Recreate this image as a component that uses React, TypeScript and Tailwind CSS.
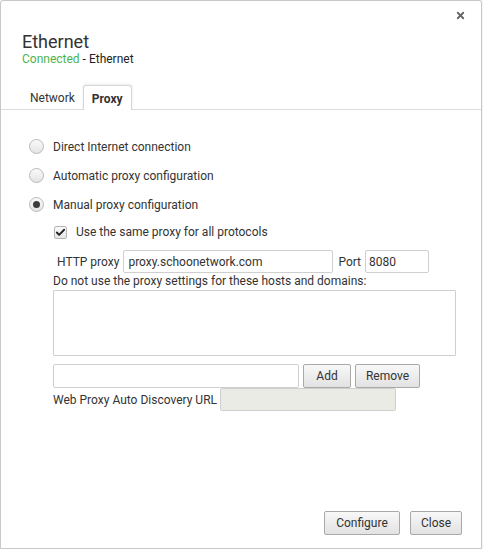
import { Check, X } from "lucide-react";

function Radio({ checked }: { checked?: boolean }) {
  return (
    <span className="flex h-[15px] w-[15px] items-center justify-center rounded-full border border-[#b9b9b9] bg-gradient-to-b from-[#fafafa] to-[#e4e4e4]">
      {checked && <span className="h-[7px] w-[7px] rounded-full bg-[#3c3c3c]" />}
    </span>
  );
}

function Btn({ children, className = "" }: { children: React.ReactNode; className?: string }) {
  return (
    <button
      className={`h-[24px] rounded-[2px] border border-[#a9a9a9] bg-gradient-to-b from-[#f8f8f8] to-[#e2e2e2] text-[12px] text-[#333] ${className}`}
    >
      {children}
    </button>
  );
}

export default function App() {
  return (
    <div
      className="h-[549px] w-[483px] bg-[#f4f4f4]"
      style={{ fontFamily: "Roboto, 'Liberation Sans', sans-serif" }}
    >
      <div className="relative flex h-[549px] w-[482px] flex-col rounded-t-[3px] border border-[#c8c8c8] bg-white">
        <X className="absolute right-[15px] top-[9px] h-[11px] w-[11px] text-[#666]" strokeWidth={4} />

        {/* Header */}
        <div className="px-[21px] pt-[31px]">
          <h1 className="text-[18px] leading-[20px] text-[#333]">Ethernet</h1>
          <p className="text-[12px] leading-[14px] text-[#222]">
            <span className="text-[#4cb54e]">Connected</span> - Ethernet
          </p>
        </div>

        {/* Tabs */}
        <div className="mt-[19px] flex items-end border-b border-[#dcdcdc] pl-[21px]">
          <div className="px-[8px] pb-[3px] text-[12px] leading-[16px] text-[#333]">Network</div>
          <div className="-mb-px rounded-t-[3px] border border-b-0 border-[#d6d6d6] bg-white px-[8px] pt-[5px] pb-[3px] text-[12px] font-bold leading-[16px] text-[#333] shadow-[0_-1px_3px_rgba(0,0,0,0.08)]">
            Proxy
          </div>
        </div>

        {/* Body */}
        <div className="px-[28px] pt-[29px] text-[12px] text-[#333]">
          <div className="flex flex-col gap-[14px]">
            <label className="flex h-[15px] items-center gap-[9px]">
              <Radio />
              Direct Internet connection
            </label>
            <label className="flex h-[15px] items-center gap-[9px]">
              <Radio />
              Automatic proxy configuration
            </label>
            <label className="flex h-[15px] items-center gap-[9px]">
              <Radio checked />
              Manual proxy configuration
            </label>
          </div>

          <div className="pl-[24px]">
            <label className="mt-[13px] flex h-[14px] items-center gap-[9px] pl-[1px]">
              <span className="flex h-[13px] w-[13px] items-center justify-center rounded-[2px] border border-[#b5b5b5] bg-gradient-to-b from-[#fafafa] to-[#e6e6e6]">
                <Check className="h-[11px] w-[11px] text-[#222]" strokeWidth={4} />
              </span>
              Use the same proxy for all protocols
            </label>

            <div className="mt-[11px] flex items-center">
              <span className="ml-[4px] mr-[4px]">HTTP proxy</span>
              <input
                className="h-[23px] w-[210px] rounded-[2px] border border-[#cfcfcf] px-[4px] text-[12px] text-[#333] outline-none"
                defaultValue="proxy.schoonetwork.com"
              />
              <span className="ml-[5px] mr-[4px]">Port</span>
              <input
                className="h-[23px] w-[64px] rounded-[2px] border border-[#cfcfcf] px-[3px] text-[12px] text-[#333] outline-none"
                defaultValue="8080"
              />
            </div>

            <p className="leading-[17px]">Do not use the proxy settings for these hosts and domains:</p>
            <textarea className="block h-[66px] w-[403px] resize-none rounded-[1px] border border-[#cfcfcf] outline-none" />

            <div className="mt-[8px] flex items-center">
              <input className="h-[24px] w-[246px] rounded-[2px] border border-[#cfcfcf] outline-none" />
              <Btn className="ml-[4px] w-[48px]">Add</Btn>
              <Btn className="ml-[4px] w-[65px]">Remove</Btn>
            </div>

            <div className="flex items-center">
              <span className="mr-[3px]">Web Proxy Auto Discovery URL</span>
              <input
                disabled
                className="h-[23px] w-[176px] rounded-[2px] border border-[#cfcfcf] bg-[#ebebe6]"
              />
            </div>
          </div>
        </div>

        {/* Footer */}
        <div className="mt-auto flex justify-end gap-[10px] pr-[19px] pb-[13px]">
          <Btn className="w-[76px]">Configure</Btn>
          <Btn className="w-[52px] border-[#777]">Close</Btn>
        </div>
      </div>
    </div>
  );
}
